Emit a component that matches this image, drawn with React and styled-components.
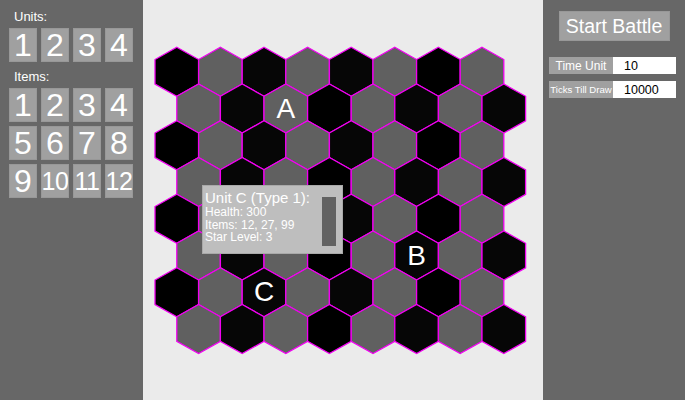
import React from "react";
import styled, { createGlobalStyle } from "styled-components";

const Global = createGlobalStyle`
  html, body { margin: 0; padding: 0; }
  body { font-family: "Liberation Sans", Arial, sans-serif; background: #ebebeb; }
`;

const Layout = styled.div`
  display: flex;
  width: 685px;
  height: 400px;
  overflow: hidden;
`;

const SidePanel = styled.aside`
  background: #676767;
  width: ${(p) => p.$width}px;
  flex: none;
  box-sizing: border-box;
  display: flex;
  flex-direction: column;
`;

const LeftPanel = styled(SidePanel)`
  padding: 9px 0 0 9px;
`;

const RightPanel = styled(SidePanel)`
  padding: 11px 9px 0 6px;
  align-items: stretch;
`;

const SectionLabel = styled.div`
  color: #fff;
  font-size: 13px;
  line-height: 15px;
  margin: ${(p) => (p.$first ? "0" : "7px")} 0 4px 5px;
`;

const TileGrid = styled.div`
  display: grid;
  grid-template-columns: repeat(4, 28px);
  grid-auto-rows: 34px;
  gap: 4px;
`;

const Tile = styled.button`
  all: unset;
  box-sizing: border-box;
  display: flex;
  align-items: center;
  justify-content: center;
  background: #a0a0a0;
  border: 1px solid #989898;
  color: #fff;
  font-family: "Liberation Sans", Arial, sans-serif;
  font-size: ${(p) => (p.$small ? 25 : 32)}px;
  letter-spacing: ${(p) => (p.$small ? "-0.5px" : "0")};
  line-height: 1;
  white-space: nowrap;
  overflow: hidden;
`;

const Center = styled.main`
  position: relative;
  flex: 1;
  background: #ebebeb;
`;

const BoardSvg = styled.svg`
  display: block;
`;

const HexLabel = styled.text`
  fill: #fff;
  font-family: "Liberation Sans", Arial, sans-serif;
  font-size: 28px;
`;

const Tooltip = styled.div`
  position: absolute;
  left: 59px;
  top: 185px;
  width: 141px;
  height: 69px;
  box-sizing: border-box;
  background: #bebebe;
  border: 1px solid #a9a9a9;
  display: flex;
  justify-content: space-between;
  align-items: flex-start;
  padding: 3px 6px 0 2px;
  color: #fff;
`;

const TipText = styled.div`
  display: flex;
  flex-direction: column;
`;

const TipTitle = styled.div`
  font-size: 15px;
  line-height: 17px;
  white-space: nowrap;
`;

const TipLine = styled.div`
  font-size: 12px;
  line-height: 12.5px;
  white-space: nowrap;
`;

const TipBar = styled.div`
  width: 14px;
  height: 49px;
  margin-top: 8px;
  background: #626262;
  flex: none;
`;

const StartButton = styled.button`
  all: unset;
  box-sizing: border-box;
  align-self: center;
  margin-left: 3px;
  width: 111px;
  height: 30px;
  display: flex;
  align-items: center;
  justify-content: center;
  background: #a0a0a0;
  border: 1px solid #989898;
  color: #fff;
  font-family: "Liberation Sans", Arial, sans-serif;
  font-size: 19.5px;
  margin-bottom: 16px;
`;

const Field = styled.div`
  display: flex;
  height: 17px;
  margin-bottom: 7px;
`;

const FieldLabel = styled.label`
  width: 64px;
  flex: none;
  background: #a0a0a0;
  color: #fff;
  font-size: ${(p) => p.$size}px;
  display: flex;
  align-items: center;
  justify-content: center;
  white-space: nowrap;
  overflow: hidden;
`;

const FieldInput = styled.input`
  all: unset;
  box-sizing: border-box;
  flex: 1;
  min-width: 0;
  background: #fff;
  color: #000;
  font-family: "Liberation Sans", Arial, sans-serif;
  font-size: 12.5px;
  padding-left: 11px;
  height: 17px;
`;

const W = 43.6;
const R = 24.5;
const X0 = 12;
const Y0 = 47.3;
const ROWS = 8;
const COLS = 8;

function hexPoints(cx, cy) {
  const w = W / 2;
  return [
    [cx, cy - R],
    [cx + w, cy - R / 2],
    [cx + w, cy + R / 2],
    [cx, cy + R],
    [cx - w, cy + R / 2],
    [cx - w, cy - R / 2],
  ]
    .map(([x, y]) => `${x.toFixed(2)},${y.toFixed(2)}`)
    .join(" ");
}

function center(r, c) {
  return [X0 + W / 2 + c * W + (r % 2) * (W / 2), Y0 + R + r * 1.5 * R];
}

const labels = [
  { r: 1, c: 2, t: "A" },
  { r: 5, c: 5, t: "B" },
  { r: 6, c: 2, t: "C" },
];

function Board() {
  const hexes = [];
  for (let r = 0; r < ROWS; r++) {
    for (let c = 0; c < COLS; c++) {
      const [cx, cy] = center(r, c);
      const dark = (r + c) % 2 === 0;
      hexes.push(
        <polygon
          key={`${r}-${c}`}
          points={hexPoints(cx, cy)}
          fill={dark ? ((r * 3 + c) % 3 === 0 ? "#000" : "#060606") : "#606060"}
          stroke="#f200f2"
          strokeWidth="1.3"
          strokeLinejoin="miter"
        />
      );
    }
  }
  return (
    <BoardSvg width="400" height="400" viewBox="0 0 400 400">
      {hexes}
      {labels.map(({ r, c, t }) => {
        const [cx, cy] = center(r, c);
        return (
          <HexLabel key={t} x={cx} y={cy + 9} textAnchor="middle">
            {t}
          </HexLabel>
        );
      })}
    </BoardSvg>
  );
}

export default function App() {
  const units = ["1", "2", "3", "4"];
  const items = ["1", "2", "3", "4", "5", "6", "7", "8", "9", "10", "11", "12"];
  return (
    <>
      <Global />
      <Layout>
        <LeftPanel $width={143}>
          <SectionLabel $first>Units:</SectionLabel>
          <TileGrid>
            {units.map((u) => (
              <Tile key={u}>{u}</Tile>
            ))}
          </TileGrid>
          <SectionLabel>Items:</SectionLabel>
          <TileGrid>
            {items.map((i) => (
              <Tile key={i} $small={i.length > 1}>
                {i}
              </Tile>
            ))}
          </TileGrid>
        </LeftPanel>
        <Center>
          <Board />
          <Tooltip>
            <TipText>
              <TipTitle>Unit C (Type 1):</TipTitle>
              <TipLine>Health: 300</TipLine>
              <TipLine>Items: 12, 27, 99</TipLine>
              <TipLine>Star Level: 3</TipLine>
            </TipText>
            <TipBar />
          </Tooltip>
        </Center>
        <RightPanel $width={142}>
          <StartButton>Start Battle</StartButton>
          <Field>
            <FieldLabel $size={12}>Time Unit</FieldLabel>
            <FieldInput defaultValue="10" />
          </Field>
          <Field>
            <FieldLabel $size={9.6}>Ticks Till Draw</FieldLabel>
            <FieldInput defaultValue="10000" />
          </Field>
        </RightPanel>
      </Layout>
    </>
  );
}
